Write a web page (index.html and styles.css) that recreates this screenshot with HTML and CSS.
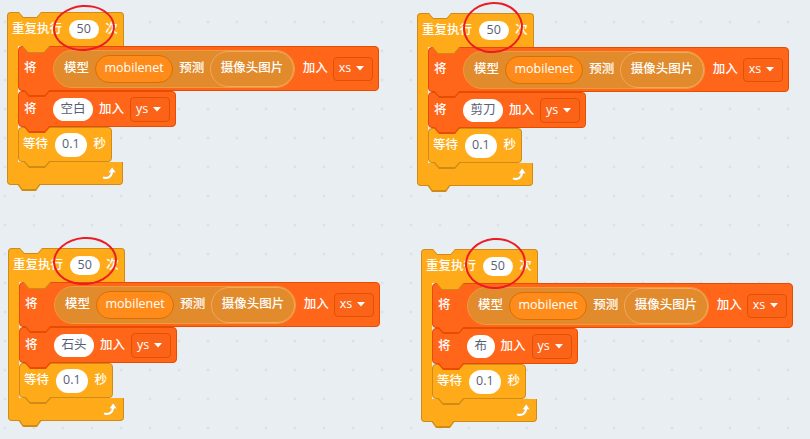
FILE: index.html
```html
<!DOCTYPE html>
<html lang="zh">
<head>
<meta charset="utf-8">
<title>Scratch scripts</title>
<link rel="stylesheet" href="styles.css">
</head>
<body>
<div class="canvas">

  <div class="script g1">
    <div class="c-head"><span>重复执行</span><span class="wpill num">50</span><span>次</span></div>
    <div class="c-mid">
      <div class="c-arm"></div>
      <div class="stack">
        <div class="blk list b-tall">
          <span class="kw">将</span>
          <span class="rep"><span>模型</span><span class="pill-m">mobilenet</span><span>预测</span><span class="pill-c">摄像头图片</span></span>
          <span class="join">加入</span>
          <span class="dd">xs<svg class="tri" width="8" height="5" viewBox="0 0 8 5"><polygon points="0,0 8,0 4,4.6" fill="#fff"/></svg></span>
        </div>
        <div class="blk list b-mid">
          <span class="kw">将</span><span class="wpill">空白</span><span>加入</span>
          <span class="dd">ys<svg class="tri" width="8" height="5" viewBox="0 0 8 5"><polygon points="0,0 8,0 4,4.6" fill="#fff"/></svg></span>
        </div>
        <div class="blk ctrl b-wait"><span>等待</span><span class="wpill">0.1</span><span>秒</span></div>
      </div>
    </div>
    <div class="c-foot"><svg class="loop" width="15" height="14" viewBox="0 0 15 14"><path d="M1.8 11.6 C6 12.6 9.6 11 10 5.4" stroke="#fff" stroke-width="2.3" fill="none" stroke-linecap="round"/><polygon points="6.4,6.4 10.2,1.2 13.8,6.6" fill="#fff"/></svg></div>
    <div class="ring"></div>
  </div>

  <div class="script g2">
    <div class="c-head"><span>重复执行</span><span class="wpill num">50</span><span>次</span></div>
    <div class="c-mid">
      <div class="c-arm"></div>
      <div class="stack">
        <div class="blk list b-tall">
          <span class="kw">将</span>
          <span class="rep"><span>模型</span><span class="pill-m">mobilenet</span><span>预测</span><span class="pill-c">摄像头图片</span></span>
          <span class="join">加入</span>
          <span class="dd">xs<svg class="tri" width="8" height="5" viewBox="0 0 8 5"><polygon points="0,0 8,0 4,4.6" fill="#fff"/></svg></span>
        </div>
        <div class="blk list b-mid">
          <span class="kw">将</span><span class="wpill">剪刀</span><span>加入</span>
          <span class="dd">ys<svg class="tri" width="8" height="5" viewBox="0 0 8 5"><polygon points="0,0 8,0 4,4.6" fill="#fff"/></svg></span>
        </div>
        <div class="blk ctrl b-wait"><span>等待</span><span class="wpill">0.1</span><span>秒</span></div>
      </div>
    </div>
    <div class="c-foot"><svg class="loop" width="15" height="14" viewBox="0 0 15 14"><path d="M1.8 11.6 C6 12.6 9.6 11 10 5.4" stroke="#fff" stroke-width="2.3" fill="none" stroke-linecap="round"/><polygon points="6.4,6.4 10.2,1.2 13.8,6.6" fill="#fff"/></svg></div>
    <div class="ring"></div>
  </div>

  <div class="script g3">
    <div class="c-head"><span>重复执行</span><span class="wpill num">50</span><span>次</span></div>
    <div class="c-mid">
      <div class="c-arm"></div>
      <div class="stack">
        <div class="blk list b-tall">
          <span class="kw">将</span>
          <span class="rep"><span>模型</span><span class="pill-m">mobilenet</span><span>预测</span><span class="pill-c">摄像头图片</span></span>
          <span class="join">加入</span>
          <span class="dd">xs<svg class="tri" width="8" height="5" viewBox="0 0 8 5"><polygon points="0,0 8,0 4,4.6" fill="#fff"/></svg></span>
        </div>
        <div class="blk list b-mid">
          <span class="kw">将</span><span class="wpill">石头</span><span>加入</span>
          <span class="dd">ys<svg class="tri" width="8" height="5" viewBox="0 0 8 5"><polygon points="0,0 8,0 4,4.6" fill="#fff"/></svg></span>
        </div>
        <div class="blk ctrl b-wait"><span>等待</span><span class="wpill">0.1</span><span>秒</span></div>
      </div>
    </div>
    <div class="c-foot"><svg class="loop" width="15" height="14" viewBox="0 0 15 14"><path d="M1.8 11.6 C6 12.6 9.6 11 10 5.4" stroke="#fff" stroke-width="2.3" fill="none" stroke-linecap="round"/><polygon points="6.4,6.4 10.2,1.2 13.8,6.6" fill="#fff"/></svg></div>
    <div class="ring"></div>
  </div>

  <div class="script g4">
    <div class="c-head"><span>重复执行</span><span class="wpill num">50</span><span>次</span></div>
    <div class="c-mid">
      <div class="c-arm"></div>
      <div class="stack">
        <div class="blk list b-tall">
          <span class="kw">将</span>
          <span class="rep"><span>模型</span><span class="pill-m">mobilenet</span><span>预测</span><span class="pill-c">摄像头图片</span></span>
          <span class="join">加入</span>
          <span class="dd">xs<svg class="tri" width="8" height="5" viewBox="0 0 8 5"><polygon points="0,0 8,0 4,4.6" fill="#fff"/></svg></span>
        </div>
        <div class="blk list b-mid">
          <span class="kw">将</span><span class="wpill">布</span><span>加入</span>
          <span class="dd">ys<svg class="tri" width="8" height="5" viewBox="0 0 8 5"><polygon points="0,0 8,0 4,4.6" fill="#fff"/></svg></span>
        </div>
        <div class="blk ctrl b-wait"><span>等待</span><span class="wpill">0.1</span><span>秒</span></div>
      </div>
    </div>
    <div class="c-foot"><svg class="loop" width="15" height="14" viewBox="0 0 15 14"><path d="M1.8 11.6 C6 12.6 9.6 11 10 5.4" stroke="#fff" stroke-width="2.3" fill="none" stroke-linecap="round"/><polygon points="6.4,6.4 10.2,1.2 13.8,6.6" fill="#fff"/></svg></div>
    <div class="ring"></div>
  </div>

</div>
</body>
</html>
```

FILE: styles.css
```css
html, body {
  margin: 0;
  padding: 0;
}

body {
  width: 810px;
  height: 439px;
  overflow: hidden;
  background-color: #e9eef2;
  background-image: radial-gradient(circle, #d3d9df 0.9px, rgba(233, 238, 242, 0) 1.4px);
  background-size: 29px 29px;
  background-position: -9.5px 7.5px;
  font-family: "Open Sans", "Noto Sans CJK SC", sans-serif;
  font-size: 12.5px;
  font-weight: 500;
  line-height: 1;
  color: #fff;
}

.canvas {
  position: relative;
  width: 810px;
  height: 439px;
}

/* free canvas: each script sits where it was dropped */
.script {
  position: absolute;
  display: flex;
  flex-direction: column;
  align-items: flex-start;
}
.g1 { left: 7px; top: 12px; }
.g2 { left: 417px; top: 13px; }
.g3 { left: 8px; top: 248px; }
.g4 { left: 421px; top: 249px; }

/* ---------- C block (repeat) ---------- */
.c-head {
  position: relative;
  box-sizing: border-box;
  height: 34px;
  display: flex;
  align-items: center;
  gap: 6.5px;
  padding: 0 5px 0 4px;
  background: #ffab19;
  border: 1px solid #cf8b17;
  border-bottom: none;
  border-radius: 4px 4px 0 0;
}
/* top notch (dent) */
.c-head::before,
.c-head::after {
  content: "";
  position: absolute;
  z-index: 1;
}
.c-head::before {
  top: -1px;
  left: 10px;
  width: 24px;
  height: 6px;
  background: #cf8b17;
  clip-path: polygon(0 0, 24px 0, 19px 6px, 5px 6px);
}
.c-head::after {
  top: -1px;
  left: 11px;
  width: 22px;
  height: 5px;
  background: #e9eef2;
  clip-path: polygon(0 0, 22px 0, 17.7px 5px, 4.3px 5px);
}

.c-mid {
  display: flex;
  align-items: stretch;
}
.c-arm {
  position: relative;
  box-sizing: border-box;
  width: 11px;
  background: #ffab19;
  border-left: 1px solid #cf8b17;
}
/* head bump into the first inner block */
.c-arm::before,
.c-arm::after {
  content: "";
  position: absolute;
  z-index: 1;
}
.c-arm::before {
  top: 0;
  left: 14px;
  width: 28px;
  height: 7px;
  background: #cf8b17;
  clip-path: polygon(0 0, 28px 0, 22px 7px, 6px 7px);
}
.c-arm::after {
  top: 0;
  left: 15px;
  width: 26px;
  height: 6px;
  background: #ffab19;
  clip-path: polygon(0 0, 26px 0, 20.9px 6px, 5.1px 6px);
}

.stack {
  display: flex;
  flex-direction: column;
  align-items: flex-start;
}

.c-foot {
  position: relative;
  box-sizing: border-box;
  width: 116px;
  height: 23px;
  display: flex;
  align-items: center;
  justify-content: flex-end;
  padding-right: 5px;
  background: #ffab19;
  border: 1px solid #cf8b17;
  border-top: none;
  border-radius: 0 0 4px 4px;
}
.c-foot::before,
.c-foot::after {
  content: "";
  position: absolute;
  z-index: 1;
}
.c-foot::before {
  bottom: -7px;
  left: 9px;
  width: 24px;
  height: 7px;
  background: #cf8b17;
  clip-path: polygon(0 0, 24px 0, 19px 7px, 5px 7px);
}
.c-foot::after {
  bottom: -6px;
  left: 10px;
  width: 22px;
  height: 7px;
  background: #ffab19;
  clip-path: polygon(0 0, 22px 0, 17.7px 6px, 4.3px 6px);
}
.loop {
  display: block;
  filter: drop-shadow(0 0 0.6px rgba(160, 100, 10, 0.7));
}

/* ---------- stack blocks ---------- */
.blk {
  position: relative;
  box-sizing: border-box;
  display: flex;
  align-items: center;
  gap: 6px;
  border: 1px solid;
  border-radius: 4px;
  padding: 0 5px;
  white-space: nowrap;
}
.blk::before,
.blk::after {
  content: "";
  position: absolute;
  z-index: 1;
}
.blk::before {
  bottom: -7px;
  left: 4px;
  width: 28px;
  height: 7px;
  clip-path: polygon(0 0, 28px 0, 22px 7px, 6px 7px);
}
.blk::after {
  bottom: -6px;
  left: 5px;
  width: 26px;
  height: 7px;
  clip-path: polygon(0 0, 26px 0, 20.9px 6px, 5.1px 6px);
}
.list {
  background: #ff661a;
  border-color: #e64d00;
}
.list::before { background: #e64d00; }
.list::after { background: #ff661a; }
.ctrl {
  background: #ffab19;
  border-color: #cf8b17;
  padding-left: 4px;
}
.ctrl::before { background: #cf8b17; }
.ctrl::after { background: #ffab19; }

.b-tall { height: 45px; }
.b-mid { height: 36px; }
.b-wait { height: 35px; gap: 6.5px; }

.kw { margin-right: 10.5px; }
.join { margin-left: 2px; margin-right: -1px; }

/* reporter: 模型 … 预测 … */
.rep {
  box-sizing: border-box;
  height: 38px;
  display: flex;
  align-items: center;
  gap: 6px;
  padding-left: 10px;
  border-radius: 19px;
  background: #e18b2d;
  border: 1px solid #f09a3c;
}
.pill-m {
  box-sizing: border-box;
  height: 28px;
  display: flex;
  align-items: center;
  padding: 0 8.5px;
  border-radius: 14px;
  background: #ff8c1a;
  border: 1px solid #db6e00;
}
.pill-c {
  box-sizing: border-box;
  height: 36px;
  display: flex;
  align-items: center;
  padding: 0 9.5px;
  border-radius: 18px;
  background: #e18b2d;
  border: 1px solid #f5a75e;
}

/* white inputs */
.wpill {
  box-sizing: border-box;
  height: 24px;
  display: flex;
  align-items: center;
  padding: 0 7.5px;
  border-radius: 12px;
  background: #fff;
  color: #575e75;
  font-weight: 400;
}
.b-mid .wpill { height: 23px; }
.num {
  height: 19px;
  padding: 0 8px;
  border-radius: 10px;
}

/* dropdown */
.dd {
  box-sizing: border-box;
  height: 24px;
  display: flex;
  align-items: center;
  gap: 5px;
  padding: 0 8px 0 5px;
  border-radius: 4px;
  background: #fb6319;
  border: 1px solid #e25100;
}
.b-mid .dd { height: 25px; }
.tri { display: block; }

/* hand-drawn red ring over the repeat count */
.ring {
  position: absolute;
  z-index: 5;
  box-sizing: border-box;
  border: 2.5px solid #ec1c24;
  border-radius: 50%;
  pointer-events: none;
}
.g1 .ring { left: 46px; top: -7px; width: 62px; height: 46px; transform: rotate(-4deg); }
.g2 .ring { left: 46px; top: -11px; width: 60px; height: 51px; transform: rotate(-6deg); }
.g3 .ring { left: 45px; top: -11px; width: 64px; height: 48px; transform: rotate(-4deg); }
.g4 .ring { left: 44px; top: -11px; width: 61px; height: 51px; transform: rotate(-5deg); }
```
